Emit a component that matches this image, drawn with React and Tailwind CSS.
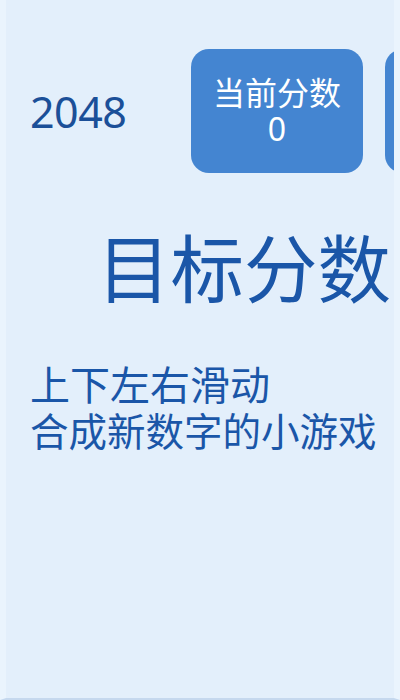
export default function App() {
  const font = { fontFamily: '"Noto Sans", "Noto Sans CJK SC", sans-serif' };
  return (
    <div className="w-[400px] h-[700px] overflow-hidden bg-[#e3effb] border-l-[6px] border-r-[6px] border-b-2 border-l-[#eaf4fd] border-r-[#eaf4fd] border-b-[#c5d8ee]" style={font}>
      <div className="flex items-center pt-[49px] pl-[24px] overflow-hidden">
        <div className="w-[161px] shrink-0 text-[43px] leading-none text-[#1b4f98] tracking-[-0.5px]">2048</div>
        <div className="w-[172px] h-[124px] shrink-0 rounded-[18px] bg-[#4485d1] flex flex-col items-center justify-center text-white text-[32px] leading-[36px]">
          <div>当前分数</div>
          <div>0</div>
        </div>
        <div className="ml-[22px] w-[172px] h-[124px] shrink-0 rounded-[18px] bg-[#4485d1]"></div>
      </div>
      <div className="pl-[91px] mt-[51px] text-[73.5px] leading-[90px] text-[#1a56a8] whitespace-nowrap">目标分数</div>
      <div className="pl-[24px] mt-[47px] text-[#1a56a8] whitespace-nowrap">
        <div className="text-[40px] leading-[47px]">上下左右滑动</div>
        <div className="text-[38.5px] leading-[47px]">合成新数字的小游戏</div>
      </div>
    </div>
  );
}
